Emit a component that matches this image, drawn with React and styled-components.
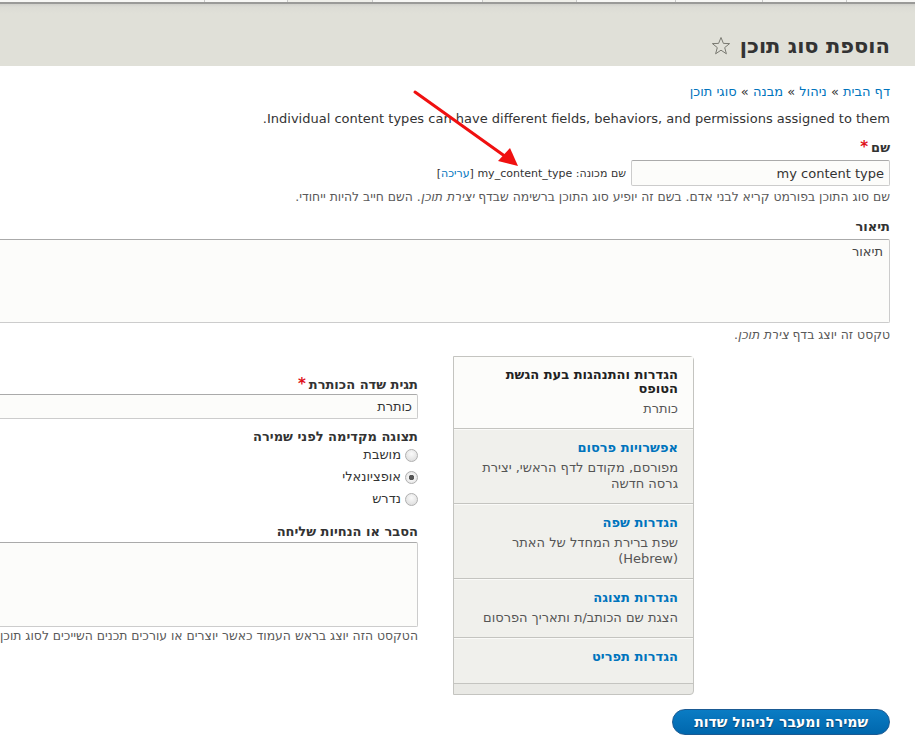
import React from "react";
import styled, { createGlobalStyle } from "styled-components";

const Global = createGlobalStyle`
  html, body {
    margin: 0;
    padding: 0;
    overflow-x: hidden;
    background: #fff;
  }
  body {
    direction: rtl;
    font-family: "DejaVu Sans", Verdana, sans-serif;
    font-size: 13px;
    color: #333;
  }
  * { box-sizing: border-box; }
`;

const Root = styled.div`
  position: relative;
  width: 100%;
  min-height: 755px;
`;

const TopStrip = styled.div`
  display: flex;
  height: 2px;
  background: #f7f7f5;
  padding-right: 68px;
`;

const StripCell = styled.div`
  width: ${(p) => p.$w}px;
  flex: none;
  border-right: 1px solid #c8c8c8;
  background: ${(p) => (p.$active ? "#efefea" : "transparent")};
`;

const Header = styled.header`
  height: 64px;
  border-top: 2px solid #9a9a98;
  background: linear-gradient(#cfcfca 0px, #dcdcd5 3px, #e0e0d8 10px, #e0e0d8 100%);
  display: flex;
  align-items: flex-end;
  padding: 0 25px 6px 0;
`;

const Title = styled.h1`
  margin: 0;
  font-size: 21px;
  line-height: 28px;
  font-weight: bold;
  color: #333;
  display: flex;
  align-items: center;
  gap: 9px;
`;

const Content = styled.main`
  width: 1100px;
  padding: 17px 25px 0 0;
`;

const Breadcrumb = styled.nav`
  line-height: 18px;
  a {
    color: #0074bd;
    text-decoration: none;
  }
`;

const Intro = styled.p`
  margin: 9px 0 0 0;
  line-height: 18px;
`;

const Label = styled.label`
  display: block;
  font-weight: bold;
  line-height: 18px;
  margin-top: ${(p) => p.$mt || 0}px;
`;

const Req = styled.span`
  color: #e0101a;
  font-size: 15px;
  margin-right: 3px;
`;

const FieldRow = styled.div`
  display: flex;
  align-items: center;
  gap: 5px;
  margin-top: 3px;
`;

const TextInput = styled.input`
  display: block;
  direction: rtl;
  width: ${(p) => p.$w || "100%"};
  height: ${(p) => p.$h || 26}px;
  margin-top: ${(p) => p.$mt || 0}px;
  font-family: "DejaVu Sans", Verdana, sans-serif;
  font-size: 13px;
  color: #333;
  padding: 2px 5px;
  border: 1px solid #ccc;
  border-top-color: #aaa;
  border-radius: 2px;
  background: #fcfcfa;
  outline: none;
`;

const MachineName = styled.span`
  font-size: 11px;
  color: #333;
  a {
    color: #0074bd;
    text-decoration: none;
  }
`;

const Desc = styled.div`
  font-size: 12.4px;
  line-height: 16px;
  color: #595959;
  margin-top: ${(p) => p.$mt || 3}px;
  white-space: nowrap;
`;

const TextArea = styled.textarea`
  display: block;
  direction: rtl;
  width: 100%;
  height: ${(p) => p.$h}px;
  margin-top: ${(p) => p.$mt || 3}px;
  font-family: "DejaVu Sans", Verdana, sans-serif;
  font-size: 13px;
  color: #444;
  padding: 4px 6px;
  border: 1px solid #ccc;
  border-top-color: #aaa;
  border-radius: 2px;
  background: #fcfcfa;
  resize: none;
  outline: none;
`;

const VTabs = styled.div`
  display: flex;
  align-items: stretch;
  margin: 13px 196px 0 0;
`;

const TabList = styled.ul`
  list-style: none;
  margin: 0;
  padding: 0 0 10px 0;
  width: 241px;
  flex: none;
  border: 1px solid #c4c4c0;
  border-radius: 0 4px 4px 0;
  background: #e9e9e5;
`;

const Tab = styled.li`
  padding: 11px 15px 11px 12px;
  background: ${(p) => (p.$selected ? "#fcfcfa" : "#f0f0ec")};
  border-bottom: 1px solid #c4c4c0;
  border-top: ${(p) => (p.$first ? "none" : "1px solid #fafaf8")};
`;

const TabTitle = styled.div`
  font-weight: bold;
  font-size: 13px;
  line-height: 14px;
  color: ${(p) => (p.$selected ? "#222" : "#0074bd")};
`;

const TabSummary = styled.div`
  margin-top: 5px;
  line-height: 16px;
  color: #555;
  min-height: 3px;
`;

const Pane = styled.div`
  flex: 1;
  padding: 19px 35px 0 0;
`;

const RadioItem = styled.label`
  display: flex;
  align-items: center;
  gap: 4px;
  line-height: 18px;
  margin-top: ${(p) => p.$mt || 0}px;
  color: #333;
`;

const Radio = styled.input.attrs({ type: "radio" })`
  appearance: none;
  margin: 0;
  width: 13px;
  height: 13px;
  border-radius: 50%;
  border: 1px solid #b0b0b0;
  background: ${(p) =>
    p.checked
      ? "radial-gradient(circle, #555 0 2.5px, #f4f4f4 3px, #dcdcdc 100%)"
      : "radial-gradient(circle at 50% 35%, #fafafa, #d8d8d8)"};
  flex: none;
`;

const Actions = styled.div`
  margin-top: 14px;
  display: flex;
`;

const Button = styled.button`
  height: 26px;
  padding: 0 21px;
  border-radius: 13px;
  border: 1px solid #1a5a93;
  background: linear-gradient(#0a7cc4, #0067ad);
  color: #fff;
  font-family: "DejaVu Sans", Verdana, sans-serif;
  font-size: 14px;
  font-weight: bold;
  text-shadow: 0 1px 1px #0b3c66;
  cursor: pointer;
`;

const Overlay = styled.svg`
  position: absolute;
  left: 0;
  top: 0;
  pointer-events: none;
`;

const StarIcon = () => (
  <svg width="20" height="20" viewBox="0 0 20 20">
    <polygon
      points="10,1.5 12.4,7.4 18.6,7.6 13.7,11.6 15.4,17.8 10,14.2 4.6,17.8 6.3,11.6 1.4,7.6 7.6,7.4"
      fill="none"
      stroke="#7a7a72"
      strokeWidth="1"
      strokeLinejoin="round"
    />
  </svg>
);

const stripCells = [
  { w: 84 },
  { w: 87 },
  { w: 99 },
  { w: 94, active: true },
  { w: 110 },
  { w: 85, active: true },
  { w: 83 },
  { w: 204 },
];

const tabs = [
  {
    title: "הגדרות והתנהגות בעת הגשת הטופס",
    summary: "כותרת",
    selected: true,
  },
  { title: "אפשרויות פרסום", summary: "מפורסם, מקודם לדף הראשי, יצירת גרסה חדשה" },
  { title: "הגדרות שפה", summary: "שפת ברירת המחדל של האתר (Hebrew)" },
  { title: "הגדרות תצוגה", summary: "הצגת שם הכותב/ת ותאריך הפרסום" },
  { title: "הגדרות תפריט", summary: "" },
];

const radios = [
  { label: "מושבת", checked: false },
  { label: "אופציונאלי", checked: true },
  { label: "נדרש", checked: false },
];

export default function App() {
  return (
    <Root>
      <Global />
      <TopStrip>
        {stripCells.map((c, i) => (
          <StripCell key={i} $w={c.w} $active={c.active} />
        ))}
      </TopStrip>
      <Header>
        <Title>
          <span>הוספת סוג תוכן</span>
          <StarIcon />
        </Title>
      </Header>
      <Content>
        <Breadcrumb>
          <a href="#">דף הבית</a> » <a href="#">ניהול</a> » <a href="#">מבנה</a> »{" "}
          <a href="#">סוגי תוכן</a>
        </Breadcrumb>
        <Intro>
          Individual content types can have different fields, behaviors, and permissions assigned to them.
        </Intro>

        <Label $mt={10}>
          שם<Req>*</Req>
        </Label>
        <FieldRow>
          <TextInput $w="259px" defaultValue="my content type" />
          <MachineName>
            שם מכונה: <span dir="ltr">my_content_type</span> [<a href="#">עריכה</a>]
          </MachineName>
        </FieldRow>
        <Desc>
          שם סוג התוכן בפורמט קריא לבני אדם. בשם זה יופיע סוג התוכן ברשימה שבדף <em>יצירת תוכן</em>. השם חייב
          להיות ייחודי.
        </Desc>

        <Label $mt={13}>תיאור</Label>
        <TextArea $h={84} defaultValue="תיאור" />
        <Desc $mt={4}>
          טקסט זה יוצג בדף <em>צירת תוכן</em>.
        </Desc>

        <VTabs>
          <TabList>
            {tabs.map((t, i) => (
              <Tab key={i} $selected={t.selected} $first={i === 0}>
                <TabTitle $selected={t.selected}>{t.title}</TabTitle>
                <TabSummary>{t.summary}</TabSummary>
              </Tab>
            ))}
          </TabList>
          <Pane>
            <Label>
              תגית שדה הכותרת<Req>*</Req>
            </Label>
            <TextInput $h={25} $mt={0} defaultValue="כותרת" />
            <Label $mt={9}>תצוגה מקדימה לפני שמירה</Label>
            <div>
              {radios.map((r, i) => (
                <RadioItem key={i} $mt={i === 0 ? 0 : 4}>
                  <Radio name="preview" readOnly checked={r.checked} />
                  {r.label}
                </RadioItem>
              ))}
            </div>
            <Label $mt={15}>הסבר או הנחיות שליחה</Label>
            <TextArea $h={85} $mt={1} />
            <Desc $mt={1}>
              הטקסט הזה יוצג בראש העמוד כאשר יוצרים או עורכים תכנים השייכים לסוג תוכן זה.
            </Desc>
          </Pane>
        </VTabs>

        <Actions>
          <Button>שמירה ומעבר לניהול שדות</Button>
        </Actions>
      </Content>
      <Overlay width="915" height="755" viewBox="0 0 915 755">
        <line x1="415" y1="92" x2="506" y2="157" stroke="#f01010" strokeWidth="3" strokeLinecap="round" />
        <polygon points="518,166 498,161 510,148" fill="#f01010" />
      </Overlay>
    </Root>
  );
}
